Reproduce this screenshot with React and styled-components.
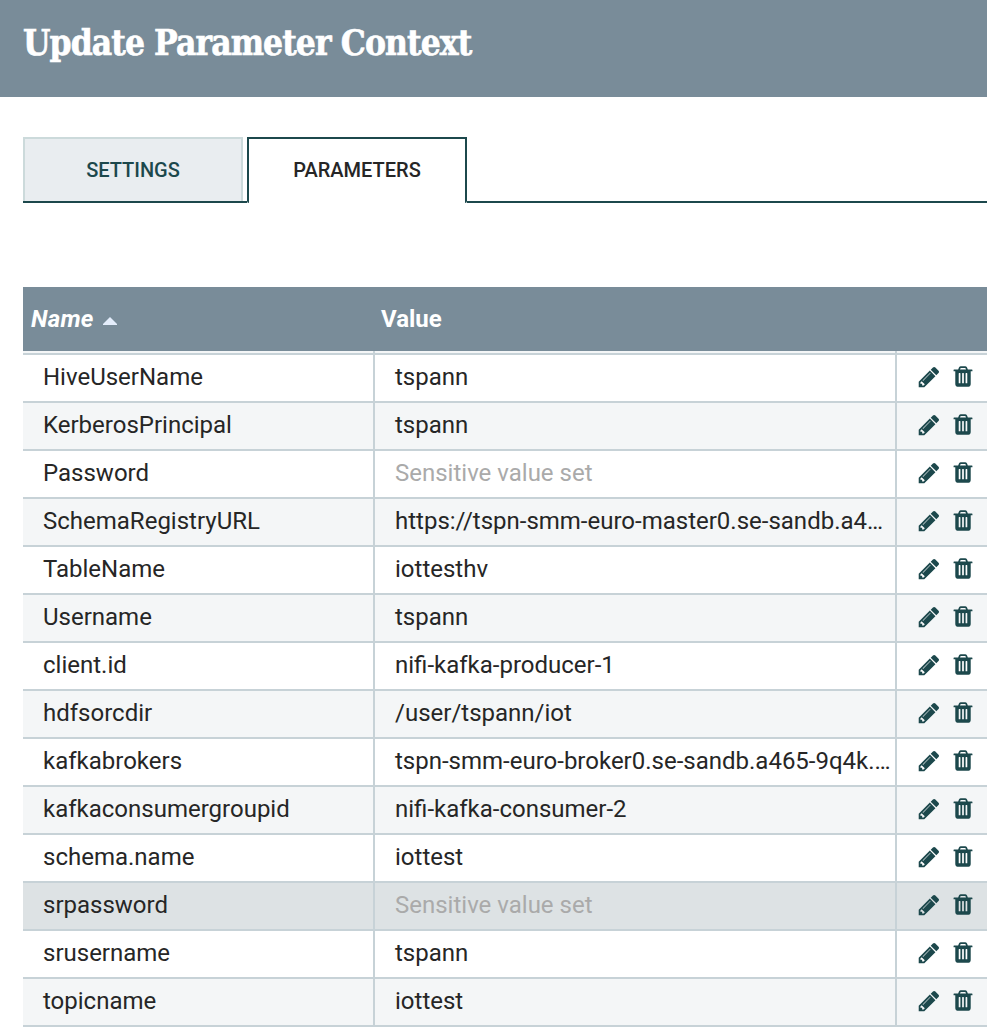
import React from "react";
import styled, { createGlobalStyle } from "styled-components";

const GlobalStyle = createGlobalStyle`
  * { box-sizing: border-box; }
  body {
    margin: 0;
    background: #fff;
    color: #262626;
    font-family: Roboto, "Liberation Sans", sans-serif;
    overflow: hidden;
  }
`;

const Dialog = styled.div`
  width: 987px;
  height: 1034px;
  overflow: hidden;
`;

const DialogHeader = styled.header`
  height: 97px;
  padding: 19px 0 0 23px;
  background: #798c99;
`;

const Title = styled.h1`
  width: max-content;
  margin: 0;
  color: #fff;
  font: 700 35px/48px "Roboto Slab", "DejaVu Serif Condensed", "DejaVu Serif", serif;
  font-stretch: condensed;
  letter-spacing: -0.9px;
  -webkit-text-stroke: 0.6px #fff;
  white-space: nowrap;
`;

const TabBar = styled.nav`
  display: flex;
  height: 66px;
  margin: 40px 0 0 23px;
`;

const TabSlot = styled.div`
  display: flex;
  border-bottom: ${(p) => (p.$active ? "0" : "2px solid #1c484c")};
`;

const Tab = styled.div`
  width: 220px;
  border: 2px solid ${(p) => (p.$active ? "#1c484c" : "#ccdadb")};
  border-bottom: 0;
  border-radius: ${(p) => (p.$active ? "0 0 2px 2px" : "0")};
  background: ${(p) => (p.$active ? "#fff" : "#e9edf0")};
  color: ${(p) => (p.$active ? "#262626" : "#1c484c")};
  font-size: 20px;
  font-weight: 500;
  line-height: 62px;
  text-align: center;
`;

const TabRule = styled.div`
  flex: ${(p) => (p.$fill ? "1" : "0 0 4px")};
  border-bottom: 2px solid #1c484c;
`;

const Table = styled.section`
  margin: 84px 0 0 23px;
`;

const columns = "350px 522px 1fr";

const TableHeader = styled.div`
  display: grid;
  grid-template-columns: ${columns};
  align-items: center;
  height: 64px;
  background: #798c99;
  color: #fff;
  font-size: 24px;
  font-weight: 700;
`;

const HeaderCell = styled.div`
  display: flex;
  align-items: center;
  padding-left: 8px;
  font-style: ${(p) => (p.$sorted ? "italic" : "normal")};
  letter-spacing: ${(p) => (p.$sorted ? "0.25px" : "0")};
`;

const SortArrow = styled.svg`
  width: 14px;
  height: 8px;
  margin: 3px 0 0 9px;
  fill: #e4edfb;
`;

const Row = styled.div`
  display: grid;
  grid-template-columns: ${columns};
  height: ${(p) => (p.$clipped ? "4px" : "48px")};
  border-bottom: 2px solid #c7d2d7;
  background: ${(p) => (p.$selected ? "#dde2e4" : p.$shaded ? "#f4f6f7" : "#fff")};
  font-size: 24px;
  line-height: 44px;
`;

const Cell = styled.div`
  min-width: 0;
  padding-left: 20px;
  color: ${(p) => (p.$muted ? "#aaa" : "#262626")};
  overflow: hidden;
  text-overflow: ellipsis;
  white-space: nowrap;
  & + & {
    padding-right: 4px;
    border-left: 2px solid #c7d2d7;
  }
`;

const Actions = styled.div`
  display: flex;
  gap: 10px;
  padding: ${(p) => (p.$empty ? "0" : "9.6px 0 0 20px")};
  border-left: 2px solid #c7d2d7;
`;

const ActionIcon = styled.svg`
  flex: none;
  width: 24px;
  height: 24px;
  fill: #1c484c;
`;

const PencilIcon = () => (
  <ActionIcon viewBox="0 0 1792 1792">
    <path d="M491 1536l91-91-235-235-91 91v107h128v128h107zm523-928q0-22-22-22-10 0-17 7l-542 542q-7 7-7 17 0 22 22 22 10 0 17-7l542-542q7-7 7-17zm-54-192l416 416-832 832h-416v-416zm683 96q0 53-37 90l-166 166-416-416 166-165q36-38 90-38 53 0 91 38l235 234q37 39 37 91z" />
  </ActionIcon>
);

const TrashIcon = () => (
  <ActionIcon viewBox="0 40 1792 1792">
    <path d="M704 1376v-704q0-14-9-23t-23-9h-64q-14 0-23 9t-9 23v704q0 14 9 23t23 9h64q14 0 23-9t9-23zm256 0v-704q0-14-9-23t-23-9h-64q-14 0-23 9t-9 23v704q0 14 9 23t23 9h64q14 0 23-9t9-23zm256 0v-704q0-14-9-23t-23-9h-64q-14 0-23 9t-9 23v704q0 14 9 23t23 9h64q14 0 23-9t9-23zm-544-992h448l-48-117q-7-9-17-11h-317q-10 2-17 11zm928 32v64q0 14-9 23t-23 9h-96v948q0 83-47 143.5t-113 60.5h-832q-66 0-113-58.5t-47-141.5v-952h-96q-14 0-23-9t-9-23v-64q0-14 9-23t23-9h309l70-167q15-37 54-63t79-26h320q40 0 79 26t54 63l70 167h309q14 0 23 9t9 23z" />
  </ActionIcon>
);

const parameters = [
  { name: "HiveUserName", value: "tspann" },
  { name: "KerberosPrincipal", value: "tspann" },
  { name: "Password", sensitive: true },
  { name: "SchemaRegistryURL", value: "https://tspn-smm-euro-master0.se-sandb.a4…" },
  { name: "TableName", value: "iottesthv" },
  { name: "Username", value: "tspann" },
  { name: "client.id", value: "nifi-kafka-producer-1" },
  { name: "hdfsorcdir", value: "/user/tspann/iot" },
  { name: "kafkabrokers", value: "tspn-smm-euro-broker0.se-sandb.a465-9q4k.…" },
  { name: "kafkaconsumergroupid", value: "nifi-kafka-consumer-2" },
  { name: "schema.name", value: "iottest" },
  { name: "srpassword", sensitive: true, selected: true },
  { name: "srusername", value: "tspann" },
  { name: "topicname", value: "iottest" },
];

export default function App() {
  return (
    <Dialog>
      <GlobalStyle />
      <DialogHeader>
        <Title>Update Parameter Context</Title>
      </DialogHeader>
      <TabBar>
        <TabSlot>
          <Tab>SETTINGS</Tab>
        </TabSlot>
        <TabRule />
        <TabSlot $active>
          <Tab $active>PARAMETERS</Tab>
        </TabSlot>
        <TabRule $fill />
      </TabBar>
      <Table>
        <TableHeader>
          <HeaderCell $sorted>
            Name
            <SortArrow viewBox="0 0 14 8">
              <path d="M7 0L14 7V8H0V7Z" />
            </SortArrow>
          </HeaderCell>
          <HeaderCell>Value</HeaderCell>
        </TableHeader>
        <Row $clipped $shaded>
          <Cell />
          <Cell />
          <Actions $empty />
        </Row>
        {parameters.map((p, i) => (
          <Row key={p.name} $shaded={i % 2 === 1} $selected={p.selected}>
            <Cell>{p.name}</Cell>
            <Cell $muted={p.sensitive}>{p.sensitive ? "Sensitive value set" : p.value}</Cell>
            <Actions>
              <PencilIcon />
              <TrashIcon />
            </Actions>
          </Row>
        ))}
      </Table>
    </Dialog>
  );
}
